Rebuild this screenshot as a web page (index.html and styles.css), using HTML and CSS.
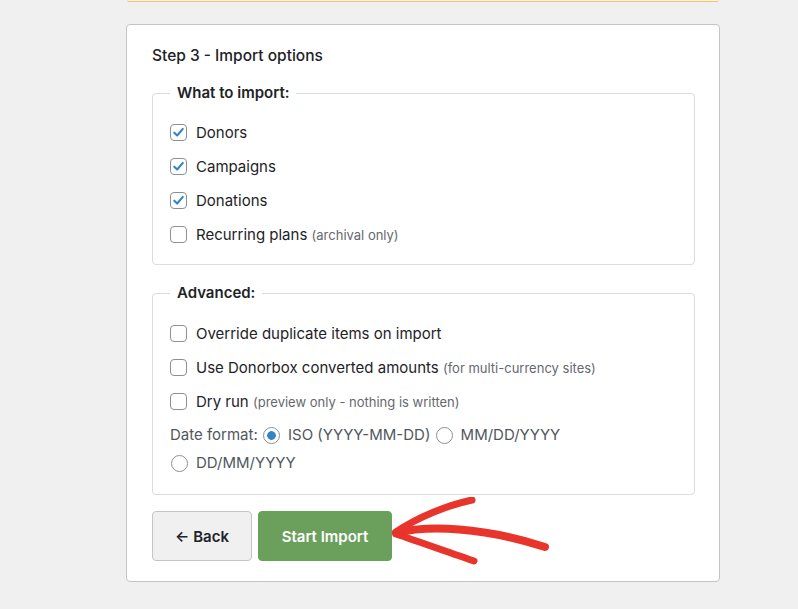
FILE: index.html
```html
<!DOCTYPE html>
<html lang="en">
<head>
    <meta charset="UTF-8">
    <meta name="viewport" content="width=device-width, initial-scale=1.0">
    <title>Donorbox Import</title>
    <link rel="stylesheet" href="styles.css">
</head>
<body>

<div class="wrap">
    <div class="notice"></div>

    <div class="card">
        <h3 class="step-title">Step 3 - Import options</h3>

        <fieldset class="group">
            <legend>What to import:</legend>
            <label class="row"><input type="checkbox" checked>Donors</label>
            <label class="row"><input type="checkbox" checked>Campaigns</label>
            <label class="row"><input type="checkbox" checked>Donations</label>
            <label class="row"><input type="checkbox"><span>Recurring plans <span class="hint">(archival only)</span></span></label>
        </fieldset>

        <fieldset class="group">
            <legend>Advanced:</legend>
            <label class="row"><input type="checkbox">Override duplicate items on import</label>
            <label class="row"><input type="checkbox"><span>Use Donorbox converted amounts <span class="hint">(for multi-currency sites)</span></span></label>
            <label class="row"><input type="checkbox"><span>Dry run <span class="hint">(preview only - nothing is written)</span></span></label>
            <div class="date-format">
                Date format:
                <label class="radio"><input type="radio" name="dateFormat" checked>ISO (YYYY-MM-DD)</label>
                <label class="radio"><input type="radio" name="dateFormat">MM/DD/YYYY</label>
                <label class="radio"><input type="radio" name="dateFormat">DD/MM/YYYY</label>
            </div>
        </fieldset>

        <div class="actions">
            <button class="btn btn-back">&larr; Back</button>
            <button class="btn btn-start">Start Import</button>
        </div>

        <!-- hand drawn arrow pointing at the start button -->
        <svg class="arrow" width="180" height="80" viewBox="0 0 180 80">
            <g fill="none" stroke="#e8342a" stroke-linecap="round" stroke-linejoin="round">
                <path d="M84 3 C60 8 30 20 8 35" stroke-width="7"/>
                <path d="M8 36 C40 28 95 30 157 50" stroke-width="8"/>
                <path d="M8 37 C35 46 62 56 86 64" stroke-width="7"/>
            </g>
        </svg>
    </div>
</div>

</body>
</html>
```

FILE: styles.css
```css
body {
    margin: 0;
    padding: 0;
    background-color: #f0f0f1;
    font-family: Inter, "Open Sans", sans-serif;
    color: #1d2327;
}
.wrap {
    width: 594px;
    margin-left: 126px;
}
.notice {
    height: 1px;
    margin: 0 1px;
    background-color: #fcf3d6;
    border-bottom: 1px solid #e6c67c;
    border-radius: 0 0 3px 3px;
}
.card {
    position: relative;
    margin-top: 22px;
    padding: 21px 24px 20px 25px;
    background-color: #fff;
    border: 1px solid #c3c4c7;
    border-radius: 4px;
}
.step-title {
    margin: 0 0 17px;
    font-size: 15.5px;
    font-weight: 500;
    line-height: 20px;
}
.group {
    margin: 0 0 18px;
    padding: 17px 17px 18px;
    border: 1px solid #dcdcde;
    border-radius: 4px;
}
.group + .group {
    padding-top: 18px;
    padding-bottom: 17px;
    margin-bottom: 16px;
}
.group legend {
    padding: 0 7px;
    font-size: 15px;
    font-weight: 600;
    line-height: 20px;
}
.row {
    display: flex;
    align-items: center;
    height: 24px;
    margin-bottom: 10px;
    font-size: 15px;
    white-space: nowrap;
}
.group .row:last-child {
    margin-bottom: 0;
}
.hint {
    font-size: 13px;
    color: #646970;
}
input[type="checkbox"],
input[type="radio"] {
    appearance: none;
    -webkit-appearance: none;
    width: 17px;
    height: 17px;
    margin: 0 9px 0 0;
    border: 1px solid #8c8f94;
    background-color: #fff;
    flex-shrink: 0;
}
input[type="checkbox"] {
    border-radius: 4px;
}
input[type="checkbox"]:checked {
    background: #fff url("data:image/svg+xml,%3Csvg xmlns='http://www.w3.org/2000/svg' viewBox='0 0 16 16'%3E%3Cpath d='M3.5 8.2 L6.6 11.2 L12.6 4.2' fill='none' stroke='%233582c4' stroke-width='2.2' stroke-linecap='round' stroke-linejoin='round'/%3E%3C/svg%3E") center / 15px 15px no-repeat;
}
input[type="radio"] {
    border-radius: 50%;
    vertical-align: -4px;
}
input[type="radio"]:checked {
    background: radial-gradient(circle, #3582c4 0, #3582c4 4px, #fff 4.6px);
}
.date-format {
    margin-top: -2px;
    font-size: 15px;
    line-height: 28px;
    color: #50575e;
}
.date-format input[type="radio"] {
    margin-left: 1px;
    margin-right: 8px;
}
.radio {
    color: #50575e;
    white-space: nowrap;
}
.actions {
    display: flex;
    gap: 6px;
}
.btn {
    height: 50px;
    padding: 0;
    border-radius: 4px;
    font-family: Inter, "Open Sans", sans-serif;
    font-size: 15px;
    font-weight: 600;
    white-space: nowrap;
    cursor: pointer;
}
.btn-back {
    width: 100px;
    background-color: #f0f0f1;
    border: 1px solid #c3c4c7;
    color: #1d2327;
}
.btn-start {
    width: 134px;
    background-color: #6a9f5c;
    border: 1px solid #6a9f5c;
    color: #fff;
}
.arrow {
    position: absolute;
    left: 261px;
    top: 472px;
}
```
